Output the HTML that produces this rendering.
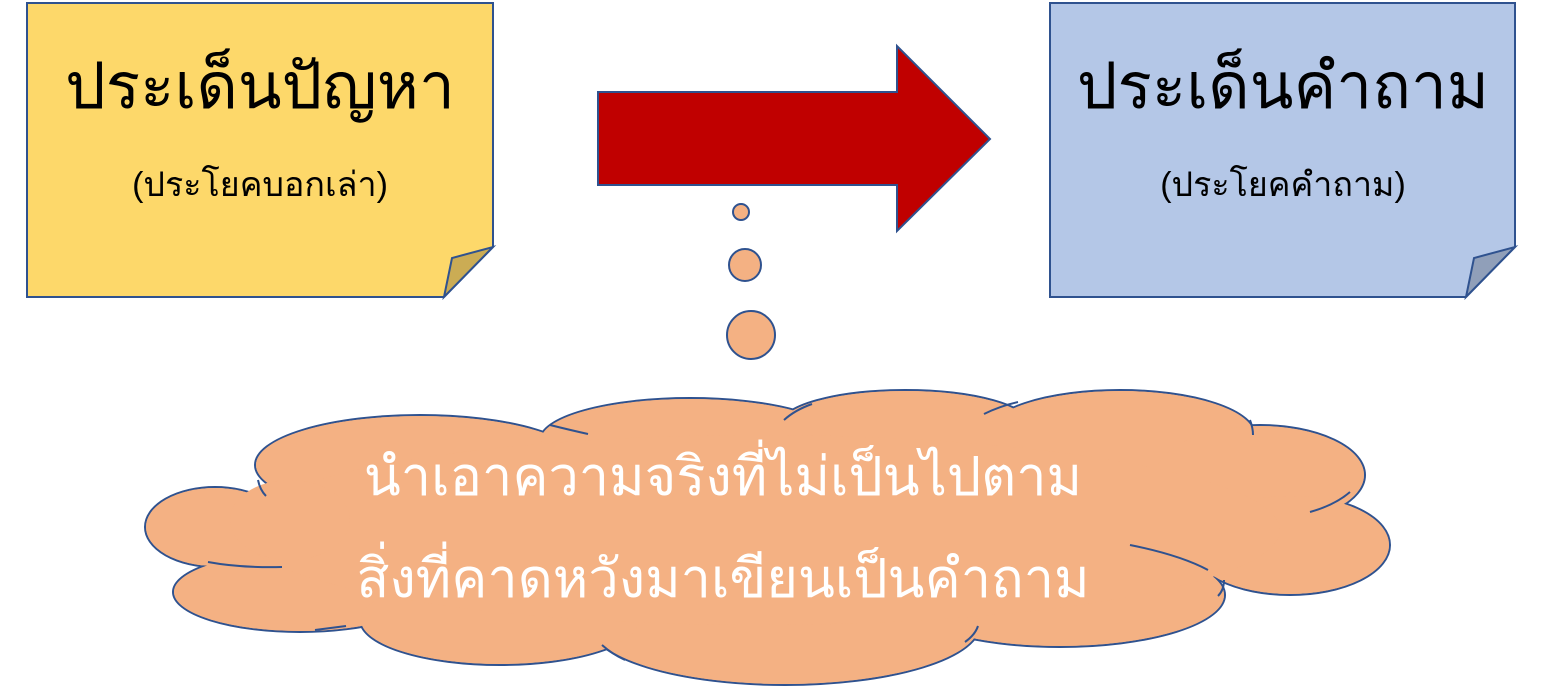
<!DOCTYPE html>
<html><head><meta charset="utf-8"><style>
html,body{margin:0;padding:0;background:#fff;width:1548px;height:686px;overflow:hidden}
svg{display:block}
text{font-family:"Liberation Sans","DejaVu Sans",sans-serif}
</style></head><body>
<svg width="1548" height="686" viewBox="0 0 1548 686" xmlns="http://www.w3.org/2000/svg">
<path d="M27,3 H493 V247 L444,297 H27 Z" fill="#FDD86A" stroke="#2F528F" stroke-width="2"/>
<path d="M444,297 L452,258 L493,247 Z" fill="#CBAC54" stroke="#2F528F" stroke-width="2"/>
<text x="260" y="108" font-size="64" text-anchor="middle" fill="#000">ประเด็นปัญหา</text>
<text x="260" y="196" font-size="34" text-anchor="middle" fill="#000">(ประโยคบอกเล่า)</text>
<path d="M1050,3 H1515 V247 L1466,297 H1050 Z" fill="#B4C7E7" stroke="#2F528F" stroke-width="2"/>
<path d="M1466,297 L1474,258 L1515,247 Z" fill="#909FB9" stroke="#2F528F" stroke-width="2"/>
<text x="1283" y="108" font-size="64" text-anchor="middle" fill="#000">ประเด็นคำถาม</text>
<text x="1283" y="196" font-size="34" text-anchor="middle" fill="#000">(ประโยคคำถาม)</text>
<path d="M598,92 H897 V46 L990,139 L897,231 V185 H598 Z" fill="#C00000" stroke="#2F528F" stroke-width="2"/>
<circle cx="741" cy="212" r="8" fill="#F4B183" stroke="#2F528F" stroke-width="2"/>
<circle cx="745" cy="265" r="16" fill="#F4B183" stroke="#2F528F" stroke-width="2"/>
<circle cx="751" cy="335" r="24" fill="#F4B183" stroke="#2F528F" stroke-width="2"/>
<g fill="#F4B183" stroke="#2F528F" stroke-width="2">
<ellipse cx="215" cy="527" rx="70" ry="40"/>
<ellipse cx="300" cy="592" rx="127" ry="40"/>
<ellipse cx="420" cy="465" rx="165" ry="50"/>
<ellipse cx="690" cy="440" rx="150" ry="42"/>
<ellipse cx="905" cy="425" rx="125" ry="35"/>
<ellipse cx="1120" cy="435" rx="135" ry="45"/>
<ellipse cx="1260" cy="475" rx="105" ry="50"/>
<ellipse cx="1290" cy="545" rx="100" ry="50"/>
<ellipse cx="1060" cy="595" rx="165" ry="52"/>
<ellipse cx="785" cy="625" rx="195" ry="60"/>
<ellipse cx="500" cy="620" rx="140" ry="45"/>
</g>
<g fill="#F4B183">
<ellipse cx="215" cy="527" rx="69" ry="39"/>
<ellipse cx="300" cy="592" rx="126" ry="39"/>
<ellipse cx="420" cy="465" rx="164" ry="49"/>
<ellipse cx="690" cy="440" rx="149" ry="41"/>
<ellipse cx="905" cy="425" rx="124" ry="34"/>
<ellipse cx="1120" cy="435" rx="134" ry="44"/>
<ellipse cx="1260" cy="475" rx="104" ry="49"/>
<ellipse cx="1290" cy="545" rx="99" ry="49"/>
<ellipse cx="1060" cy="595" rx="164" ry="51"/>
<ellipse cx="785" cy="625" rx="194" ry="59"/>
<ellipse cx="500" cy="620" rx="139" ry="44"/>
<ellipse cx="760" cy="530" rx="520" ry="95"/>
<ellipse cx="290" cy="520" rx="60" ry="40"/>
</g>
<g fill="none" stroke="#2F528F" stroke-width="2">
<path d="M258,480 Q260,490 266,496"/>
<path d="M208,562 Q240,568 282,567"/>
<path d="M550,425 Q570,430 588,434"/>
<path d="M784,420 Q795,410 812,404"/>
<path d="M984,414 Q1000,406 1018,402"/>
<path d="M1250,420 Q1253,428 1253,435"/>
<path d="M1350,492 Q1335,505 1310,512"/>
<path d="M1130,545 Q1180,555 1208,570"/>
<path d="M1224,580 Q1224,590 1218,596"/>
<path d="M978,626 Q975,635 965,642"/>
<path d="M602,645 Q612,654 625,660"/>
<path d="M315,630 Q330,628 346,626"/>
</g>
<text x="723" y="495" font-size="54" text-anchor="middle" fill="#fff">นำเอาความจริงที่ไม่เป็นไปตาม</text>
<text x="723" y="597" font-size="54" text-anchor="middle" fill="#fff">สิ่งที่คาดหวังมาเขียนเป็นคำถาม</text>
</svg>
</body></html>
